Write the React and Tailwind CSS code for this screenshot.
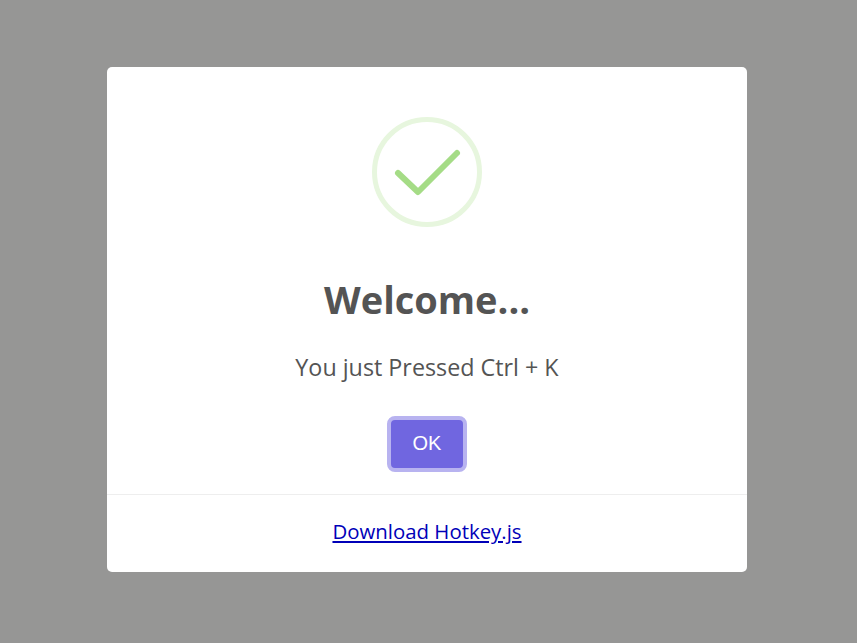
import React from 'react'

function SuccessIcon(){
  return (
    <svg width="112" height="112" viewBox="0 0 112 112" fill="none" className="block">
      <circle cx="56" cy="56" r="52.5" stroke="#e7f6de" strokeWidth="5" />
      <path d="M27 57 L47 76 L86 37" stroke="#a5dc86" strokeWidth="6" strokeLinecap="round" strokeLinejoin="round" />
    </svg>
  )
}

export default function App(){
  return (
    <div className="min-h-screen bg-[#969695] pt-[67px] [font-family:'Open_Sans',sans-serif]">
      <div className="ml-[107px] w-[640px] h-[505px] rounded-[5px] bg-white flex flex-col items-center">
        <div className="mt-[49px]"><SuccessIcon /></div>
        <h2 className="mt-[47px] text-[38px] leading-[48px] font-bold text-[#545454]">Welcome...</h2>
        <p className="mt-[29px] mb-px text-[23.3px] leading-[30px] text-[#545454]">You just Pressed Ctrl + K</p>
        <button className="mt-[33px] w-[80px] h-[56px] pb-0.5 rounded-[8px] border-4 border-[#b8b3f0] bg-[#7066e0] text-white text-[20px] [font-family:'Liberation_Sans',Arial,sans-serif]">OK</button>
        <div className="mt-[22px] w-full border-t border-[#eeeeee] flex-1 flex justify-center pt-[21px]">
          <a href="#" className="text-[20.4px] leading-[30px] text-[#0000b8] underline">Download Hotkey.js</a>
        </div>
      </div>
    </div>
  )
}
